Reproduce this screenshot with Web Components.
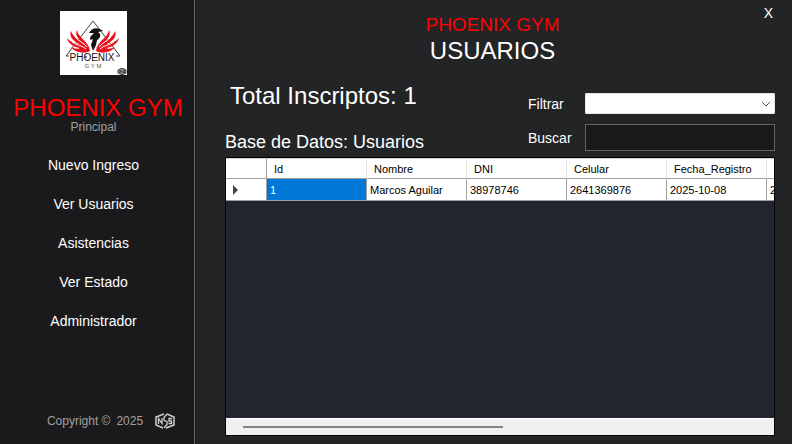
<!DOCTYPE html>
<html lang="es">
<head>
<meta charset="utf-8">
<title>Phoenix Gym - Usuarios</title>
<style>
html, body { height: 100%; }
body { margin: 0; background: #222426; color: #fff; font-family: "Liberation Sans", Arial, sans-serif; font-size: 14px; }
</style>
</head>
<body>
<gym-app></gym-app>
<script>
const define = (name, html) => customElements.define(name, class extends HTMLElement {
  constructor() {
    super();
    const t = document.createElement('template');
    t.innerHTML = html;
    this.attachShadow({ mode: 'open' }).append(t.content.cloneNode(true));
  }
});

define('phoenix-logo', `
<style>:host { display: block; width: 67px; height: 64px; background: #fff; } svg { display: block; }</style>
<svg width="67" height="64" viewBox="0 0 67 64" role="img" aria-label="Phoenix Gym">
  <path d="M9 45 H6 L33 10 L60 45 H56" fill="none" stroke="#444" stroke-width="1"/>
  <g fill="#e9111d">
    <path d="M30 40 C25 43 15 42 11 36 C15 38 18 38 20 37 C13 36 8 32 7 27 C11 31 16 33 19 33 C12 29 9 25 11 20 C13 26 18 28 21 31 C17 26 15 23 17 19 C18 27 29 30 30 40Z"/>
    <path d="M36 40 C41 43 51 42 55 36 C51 38 48 38 46 37 C53 36 58 32 59 27 C55 31 50 33 47 33 C54 29 57 25 55 20 C53 26 48 28 45 31 C49 26 51 23 49 19 C48 27 37 30 36 40Z"/>
  </g>
  <g fill="none" stroke="#fff" stroke-width="1">
    <path d="M12 31 C18 35 22 34 26 38 M15 26 C20 31 24 32 27 36"/>
    <path d="M54 31 C48 35 44 34 40 38 M51 26 C46 31 42 32 39 36"/>
  </g>
  <path d="M29 22 C32 16 38 16 43 20 L38 21 C42 23 40 28 37 29 L36 34 L33 40 L31 34 L33 28 C30 30 29 28 31 25 L34 22Z" fill="#111"/>
  <text x="32" y="50" text-anchor="middle" font-family="Liberation Sans, Arial, sans-serif" font-size="10" fill="#111">PHOENIX</text>
  <circle cx="26" cy="46" r="1" fill="#444"/>
  <text x="33" y="57" text-anchor="middle" font-family="Liberation Sans, Arial, sans-serif" font-size="6" fill="#555">G Y M</text>
  <path d="M61 57.500 L58 59 V62 L61 63.500 H63 L66 62 V59 L63 57.500Z" fill="#999" stroke="#444"/>
  <path d="M60 62 V59.500 L62 61.500 V59.500 M65 59.500 H63.500 L65 61.500 H63" stroke="#222" stroke-width=".8" fill="none"/>
</svg>`);

define('nss-mark', `
<style>:host { display: block; } svg { display: block; }</style>
<svg width="20" height="16" viewBox="0 0 20 16" role="img" aria-label="NSS" fill="none" stroke="#d0d0d0">
  <path d="M9 1 L1 4 V12 L8 15 M11 15 L19 12 V4 L12 1" stroke-width="1.500"/>
  <path d="M3.500 11 V5.500 L7 10.500 V5 M12 1 L9 4.500 V7.500 L12 8.500 V11.500 L9 15 M17 5.500 H14 V8 H16.500 V10.500 H13.500" stroke-width="1.300"/>
</svg>`);

define('nav-item', `
<style>
:host { display: block; }
button { display: block; width: 100%; height: 39px; padding: 0; border: 0; background: none; color: #fff; font: inherit; cursor: pointer; }
</style><button type="button"><slot></slot></button>`);

define('side-bar', `
<style>
:host { display: flex; flex-direction: column; box-sizing: border-box; background: #1a1a1c; border-right: 1px solid #6b6b6b; padding: 11px 0 15px; }
header { display: flex; flex-direction: column; }
phoenix-logo { align-self: center; }
phoenix-logo, .sub, nav { margin-right: 7px; }
.brand { color: #f00; font-size: 24px; line-height: 28px; margin-top: 19px; padding-left: 2px; text-align: center; }
.sub, footer { color: #a0a0a0; font-size: 12px; }
.sub { text-align: center; line-height: 12px; margin-top: -1px; }
nav { margin-top: 12px; flex: 1; }
footer { display: flex; justify-content: center; align-items: center; gap: 6px; padding-left: 28px; }
nss-mark { margin-left: 6px; }
</style>
<header><phoenix-logo></phoenix-logo><div class="brand">PHOENIX GYM</div><div class="sub">Principal</div></header>
<nav aria-label="Principal">
<nav-item>Nuevo Ingreso</nav-item><nav-item>Ver Usuarios</nav-item><nav-item>Asistencias</nav-item><nav-item>Ver Estado</nav-item><nav-item>Administrador</nav-item>
</nav>
<footer><span>Copyright ©</span><span>2025</span><nss-mark></nss-mark></footer>`);

define('page-title', `
<style>
:host { display: block; text-align: center; }
p, h1 { margin: 0; font-weight: 400; }
p { color: #f00; font-size: 19px; line-height: 24px; }
h1 { font-size: 24px; line-height: 28px; }
</style><p><slot name="brand"></slot></p><h1><slot></slot></h1>`);

define('filter-form', `
<style>
:host { display: grid; grid-template-columns: 57px 190px; row-gap: 10px; align-items: center; }
select, input, .pick { box-sizing: border-box; width: 100%; }
.pick { position: relative; }
select { display: block; appearance: none; height: 21px; border: 1px solid #e5e5e5; border-radius: 1px; background: #fff; color: #000; padding: 0 20px 0 4px; font: inherit; }
svg { position: absolute; right: 4px; top: 7px; pointer-events: none; }
input { height: 27px; border: 1px solid #646464; background: #1a1a1c; color: #fff; font: inherit; padding: 0 4px; }
</style>
<label for="f">Filtrar</label>
<div class="pick"><select id="f"><option></option></select><svg width="10" height="8" viewBox="0 0 10 8" fill="none" stroke="#555"><path d="M1 2 L5 6 L9 2"/></svg></div>
<label for="b">Buscar</label><input id="b" type="text">`);

define('data-grid', `
<style>
:host { display: flex; flex-direction: column; min-width: 0; border: 1px solid #000; background: #22242f; color: #000; font-size: 11px; }
.view { flex: 1; overflow: hidden; }
table { table-layout: fixed; width: 641px; border-spacing: 0; border-top: 1px solid #d0d0d0; }
th, td { box-sizing: border-box; height: 22px; padding: 0 0 0 3px; text-align: left; font-weight: 400; background: #fff; border-right: 1px solid #a0a0a0; border-bottom: 1px solid #a0a0a0; white-space: nowrap; }
thead th { height: 20px; padding-left: 7px; border-right-color: #e5e5e5; }
.mark { width: 41px; border-right-color: #a0a0a0; }
tbody th { padding-left: 7px; }
.sel { background: #0078d7; color: #fff; }
svg { display: block; }
.bar { height: 16px; border-top: 1px solid #fff; background: #f0f0f0; display: flex; align-items: center; padding: 0 17px; }
.thumb { width: 260px; max-width: 100%; height: 2px; background: #858585; }
</style>
<div class="view"><table>
<thead><tr><th class="mark"></th><th>Id</th><th>Nombre</th><th>DNI</th><th>Celular</th><th>Fecha_Registro</th><th></th></tr></thead>
<tbody><tr><th scope="row"><svg width="6" height="10" viewBox="0 0 6 10"><path d="M0 0 L5 5 L0 10Z" fill="#444"/></svg></th><td class="sel">1</td><td>Marcos Aguilar</td><td>38978746</td><td>2641369876</td><td>2025-10-08</td><td>2</td></tr></tbody>
</table></div>
<div class="bar"><div class="thumb"></div></div>`);

define('gym-app', `
<style>
:host { display: grid; grid-template-columns: 195px minmax(0, 1fr); min-height: 100vh; }
main { display: flex; flex-direction: column; padding: 0 17px 8px 29px; min-width: 0; box-sizing: border-box; border-left: 1px solid #1c1c1e; }
.top { display: grid; grid-template-columns: 1fr auto 1fr; padding-top: 13px; }
page-title { grid-column: 2; margin-right: 15px; }
.top button { justify-self: end; align-self: start; margin-top: -9px; padding: 0 2px; border: 0; background: none; color: #fff; font: inherit; line-height: 18px; }
.tools { display: flex; justify-content: space-between; align-items: flex-start; height: 92px; }
.heads { padding-top: 16px; }
h2 { margin: 0; font-weight: 400; font-size: 24px; line-height: 30px; padding-left: 5px; }
h3 { margin: 19px 0 0; font-weight: 400; font-size: 18px; line-height: 24px; }
filter-form { margin-top: 28px; }
data-grid { flex: 1; }
</style>
<side-bar></side-bar>
<main>
<div class="top"><page-title><span slot="brand">PHOENIX GYM</span>USUARIOS</page-title><button type="button" aria-label="Cerrar">X</button></div>
<div class="tools"><div class="heads"><h2>Total Inscriptos: 1</h2><h3>Base de Datos: Usuarios</h3></div><filter-form></filter-form></div>
<data-grid></data-grid>
</main>`);
</script>
</body>
</html>
